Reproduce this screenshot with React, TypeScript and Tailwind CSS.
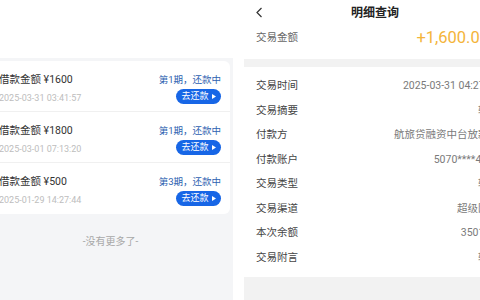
import React from 'react';

const font = { fontFamily: 'Roboto, "Noto Sans CJK SC", sans-serif' };

const loans = [
  { amount: '¥1600', date: '2025-03-31 03:41:57', term: '第1期，还款中' },
  { amount: '¥1800', date: '2025-03-01 07:13:20', term: '第1期，还款中' },
  { amount: '¥500', date: '2025-01-29 14:27:44', term: '第3期，还款中' },
];

const details = [
  { label: '交易时间', value: '2025-03-31 04:27:39' },
  { label: '交易摘要', value: '转账' },
  { label: '付款方', value: '航旅贷融资中台放款户' },
  { label: '付款账户', value: '5070****4581' },
  { label: '交易类型', value: '转账' },
  { label: '交易渠道', value: '超级网银' },
  { label: '本次余额', value: '3501.00' },
  { label: '交易附言', value: '转账' },
];

const LoanList: React.FC = () => {
  return (
    <div className="w-[233px] shrink-0 flex flex-col">
      <div className="h-[58px] bg-white" />
      <div className="flex-1 bg-[#f4f5f7] pt-[3px]">
        <div className="w-[230px] bg-white rounded-r-[6px]">
          {loans.map((loan, index) => (
            <div
              key={index}
              className={`h-[51px] flex justify-between pr-[9px] ${
                index < loans.length - 1 ? 'border-b border-[#f0f0f0]' : ''
              }`}
            >
              <div className="flex flex-col pt-[11px] -ml-[1px]">
                <div className="h-[15px] leading-[15px] text-[10.5px] text-[#333]">
                  借款金额 {loan.amount}
                </div>
                <div className="mt-[5px] h-[12px] leading-[12px] text-[9px] text-[#bdbdbd]">
                  {loan.date}
                </div>
              </div>
              <div className="flex flex-col items-end pt-[11px]">
                <div className="h-[15px] leading-[15px] text-[9.5px] text-[#2d5fb0]">
                  {loan.term}
                </div>
                <div className="mt-[2px] h-[15px] w-[45px] rounded-full bg-[#1766e6] flex items-center justify-center gap-[3px] text-white text-[9px]">
                  <span>去还款</span>
                  <svg width="4" height="5" viewBox="0 0 4 5">
                    <path d="M0 0 L4 2.5 L0 5 Z" fill="#fff" />
                  </svg>
                </div>
              </div>
            </div>
          ))}
        </div>
        <div className="mt-[22px] text-center text-[10px] leading-[12px] text-[#a8a8a8] pr-[12px]">
          -没有更多了-
        </div>
      </div>
    </div>
  );
};

const Detail: React.FC = () => {
  return (
    <div className="w-[262px] shrink-0 ml-[11px] bg-white flex flex-col">
      <div className="h-[25px] relative flex items-center justify-center">
        <svg
          className="absolute left-[11px] top-[7px]"
          width="9"
          height="11"
          viewBox="0 0 9 11"
          fill="none"
        >
          <path d="M6.5 1 L2 5.5 L6.5 10" stroke="#333" strokeWidth="1.2" />
        </svg>
        <span className="text-[12px] font-bold text-[#222]">明细查询</span>
      </div>
      <div className="h-[26px] flex items-center justify-between pl-[12px] pr-[17px]">
        <span className="text-[10.5px] text-[#666]">交易金额</span>
        <span className="text-[16.5px] text-[#f4b43a]">+1,600.00</span>
      </div>
      <div className="mt-[8px] h-[8px] bg-[#f2f2f2]" />
      <div className="py-[7px] pl-[12px] pr-[7px]">
        {details.map((row) => (
          <div key={row.label} className="h-[24.5px] flex items-center justify-between">
            <span className="text-[10.5px] text-[#444]">{row.label}</span>
            <span className="text-[10.5px] text-[#7a7a7a] whitespace-nowrap">{row.value}</span>
          </div>
        ))}
      </div>
      <div className="flex-1 bg-[#f2f2f2]" />
    </div>
  );
};

export default function App() {
  return (
    <div className="w-[480px] h-[300px] overflow-hidden bg-white flex" style={font}>
      <LoanList />
      <Detail />
    </div>
  );
}
